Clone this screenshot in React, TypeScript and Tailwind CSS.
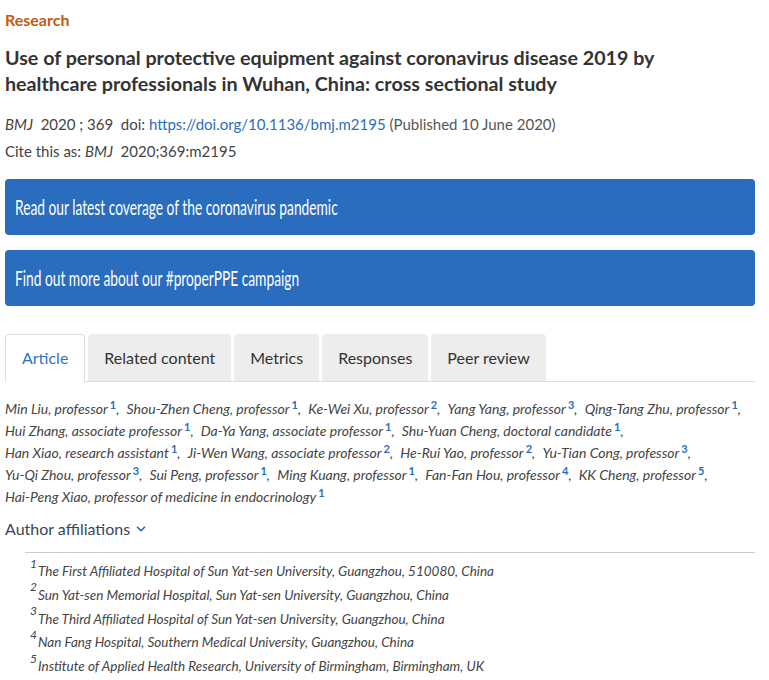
import { ChevronDown } from "lucide-react";

const authors: [string, number][] = [
  ["Min Liu, professor", 1],
  ["Shou-Zhen Cheng, professor", 1],
  ["Ke-Wei Xu, professor", 2],
  ["Yang Yang, professor", 3],
  ["Qing-Tang Zhu, professor", 1],
  ["Hui Zhang, associate professor", 1],
  ["Da-Ya Yang, associate professor", 1],
  ["Shu-Yuan Cheng, doctoral candidate", 1],
  ["Han Xiao, research assistant", 1],
  ["Ji-Wen Wang, associate professor", 2],
  ["He-Rui Yao, professor", 2],
  ["Yu-Tian Cong, professor", 3],
  ["Yu-Qi Zhou, professor", 3],
  ["Sui Peng, professor", 1],
  ["Ming Kuang, professor", 1],
  ["Fan-Fan Hou, professor", 4],
  ["KK Cheng, professor", 5],
  ["Hai-Peng Xiao, professor of medicine in endocrinology", 1],
];

// line breaks as in the page
const lines = [
  [0, 1, 2, 3, 4],
  [5, 6, 7],
  [8, 9, 10, 11],
  [12, 13, 14, 15, 16],
  [17],
];

const affiliations = [
  "The First Affiliated Hospital of Sun Yat-sen University, Guangzhou, 510080, China",
  "Sun Yat-sen Memorial Hospital, Sun Yat-sen University, Guangzhou, China",
  "The Third Affiliated Hospital of Sun Yat-sen University, Guangzhou, China",
  "Nan Fang Hospital, Southern Medical University, Guangzhou, China",
  "Institute of Applied Health Research, University of Birmingham, Birmingham, UK",
];

const tabs = ["Article", "Related content", "Metrics", "Responses", "Peer review"];

export default function App() {
  return (
    <div className="w-[750px] ml-[5px] pt-2 pb-4 text-[#333] font-['Lato']">
      <div className="text-[16px] leading-6 font-bold text-[#c45a10]">Research</div>

      <h1 className="mt-[13px] text-[19.7px] leading-[26px] font-bold text-[#333]">
        Use of personal protective equipment against coronavirus disease 2019 by
        <br />
        healthcare professionals in Wuhan, China: cross sectional study
      </h1>

      <div className="mt-[14px] text-[15px] leading-[27px] text-[#444]">
        <p>
          <span className="italic">BMJ</span>&nbsp; 2020 ; 369&nbsp; doi:{" "}
          <a href="#" className="text-[#2a6ebb]">
            https://doi.org/10.1136/bmj.m2195
          </a>{" "}
          <span className="text-[#555]">(Published 10 June 2020)</span>
        </p>
        <p>
          Cite this as: <span className="italic">BMJ</span>&nbsp; 2020;369:m2195
        </p>
      </div>

      {/* BANNERS */}
      <div className="mt-[14px] space-y-[15px]">
        {[
          "Read our latest coverage of the coronavirus pandemic",
          "Find out more about our #properPPE campaign",
        ].map((t) => (
          <a
            key={t}
            href="#"
            className="flex items-center h-14 px-[10px] rounded bg-[#2a6cbd] text-white"
          >
            <span className="inline-block whitespace-nowrap text-[21px] scale-x-[0.655] origin-left">
              {t}
            </span>
          </a>
        ))}
      </div>

      {/* TABS */}
      <div className="mt-7 flex items-end border-b border-[#ddd]">
        {tabs.map((t, i) =>
          i === 0 ? (
            <div
              key={t}
              className="h-12 px-4 flex items-center bg-white border border-[#ddd] border-b-white -mb-px rounded-t text-[16px] text-[#2f74c4]"
            >
              {t}
            </div>
          ) : (
            <div
              key={t}
              className="ml-[3px] h-12 px-4 flex items-center bg-[#ededed] rounded-t text-[16px] text-[#333] -mb-px border-b border-[#ddd]"
            >
              {t}
            </div>
          )
        )}
      </div>

      {/* AUTHORS */}
      <div className="mt-4 text-[14px] leading-[22px] text-[#444]">
        {lines.map((row, r) => (
          <div key={r}>
            {row.map((idx, k) => {
              const [name, n] = authors[idx];
              const last = idx === authors.length - 1;
              return (
                <span key={idx}>
                  <span className="italic">{name}</span>
                  <sup className="font-bold text-[#2a6ebb] text-[11px] ml-[2px]">{n}</sup>
                  {!last && <span className="italic">,</span>}
                  {k < row.length - 1 && <>&nbsp; </>}
                </span>
              );
            })}
          </div>
        ))}
      </div>

      <button className="mt-[9px] flex items-center gap-1 text-[16px] leading-6 text-[#3a4656]">
        Author affiliations
        <ChevronDown size={14} strokeWidth={3} className="text-[#2a6ebb]" />
      </button>

      <div className="ml-5 mt-[11px] border-t border-[#ccc] pt-[7px] pl-[5px] text-[13.5px] leading-[23.75px] text-[#444]">
        {affiliations.map((a, i) => (
          <div key={a} className="italic">
            <sup className="text-[12px] -top-[0.7em] mr-[1px]">{i + 1}</sup>
            {a}
          </div>
        ))}
      </div>
    </div>
  );
}
